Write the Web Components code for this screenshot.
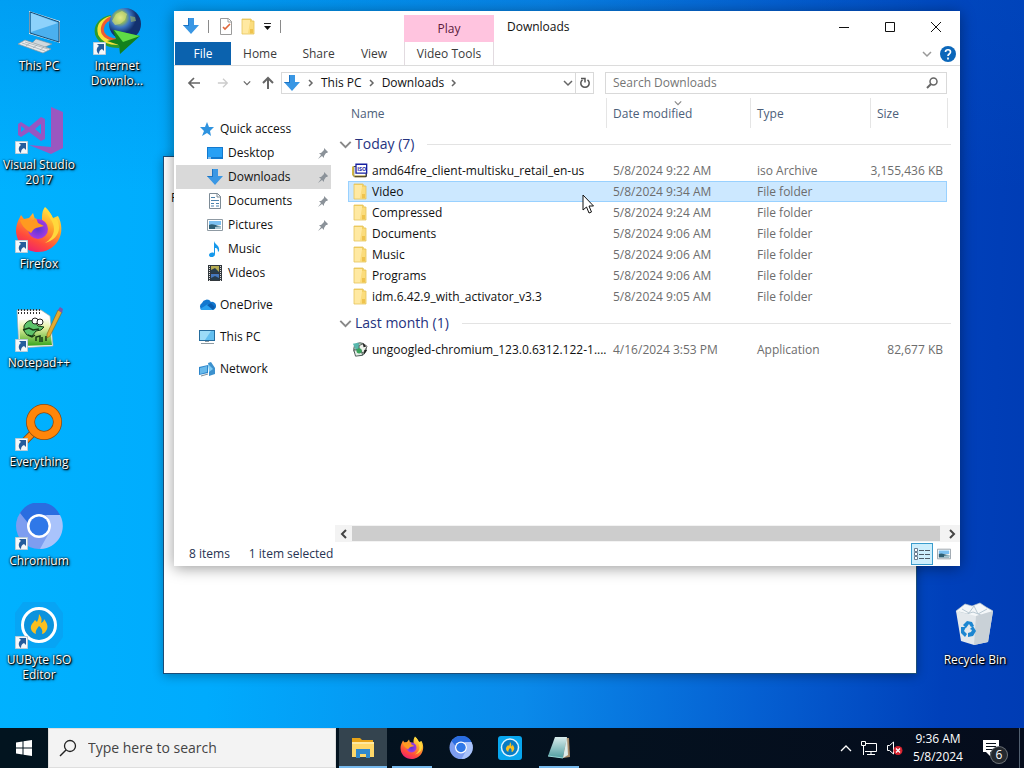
<!DOCTYPE html>
<html lang="en">
<head>
<meta charset="utf-8">
<title>Desktop</title>
<style>
html, body { margin: 0; height: 100%; }
body { font: 12px/16px "Open Sans", "Noto Sans", sans-serif; color: #111; overflow: hidden; }
</style>
</head>
<body>
<desktop-shell></desktop-shell>
<script>
const FOLDER = '<path d="M1 1h9l1 2h2v13H1z" fill="#f2cf62"/><path d="M1 2h8v14H1z" fill="#ffe9a2"/><path d="M9 4l4-1v13l-6-1z" fill="#fbdc7c"/><path d="M9 11h3v4H9z" fill="#efc34e"/><path d="M1 1h9l1 2h2v13H1z" fill="none" stroke="#e6c45c" stroke-width=".8"/>';
const DOWN = '<path d="M6 0h6v7h5l-8 9-8-9h5z" fill="#3a97e4"/><path d="M6 0h1v8H2l7 8-8-9h5z" fill="#1b74c5"/>';
const FLAME = '<path d="M24 12c3 4 3 6 2 9 2-1 3-2 3-4 3 4 5 8 2 12-1 2-3 3-4 3 1-3 0-6-3-8-2 3-4 5-3 8-3-1-6-4-5-8 1-3 3-4 4-6l2 2c1-2 2-5 2-8z" fill="#fbbf1f"/>';
const FIREFOX = `<defs><linearGradient id="a" x1=".8" y1="0" x2=".3" y2="1"><stop offset="0" stop-color="#fff04a"/><stop offset=".4" stop-color="#ffa02a"/><stop offset=".75" stop-color="#ff4a3c"/><stop offset="1" stop-color="#ee1f70"/></linearGradient><radialGradient id="b"><stop offset="0" stop-color="#5b35d6"/><stop offset="1" stop-color="#a43be0"/></radialGradient></defs>
<path d="M30 1c5 4 6 8 8 11l5-2c4 7 5 17 0 25-5 8-13 11-20 11C11 46 1 37 1 24c0-5 2-9 3-11l2-4 3 4 5-1 4-5 2 6 7 1c0-5 0-9 3-13z" fill="url(#a)"/>
<circle cx="23" cy="23" r="10" fill="url(#b)"/><path d="M5 14l6-1 6 2 4-3 2 5 6 3-8 2c-3 1-4 4-5 5-4-3-9-6-11-13z" fill="#ff9a20"/><path d="M31 3c1 8 8 11 8 20 0 6-4 11-9 14 8-2 14-8 14-15 0-4-1-8-3-10l-3 1C37 8 34 6 31 3z" fill="#ffd83c"/>`;
const CHROMIUM = '<circle cx="24" cy="23" r="23" fill="#7d9df0"/><path d="M5 10A23 23 0 0 1 45 12H24c-6 0-10 4-11 8z" fill="#2a6de0"/><path d="M45 12a23 23 0 0 1-20 34l10-18c2-5 1-11-4-16z" fill="#a9c3fb"/><circle cx="24" cy="23" r="12" fill="#fff"/><circle cx="24" cy="23" r="9.500" fill="#2f78e8"/>';
const PICTURE = '<path d="M.5 2.500h15v11H.5z" fill="#fff" stroke="#8f9aa3"/><path d="M2 4h12v4H2z" fill="#7cc0f0"/><path d="M2 8c4-2 6 1 12 1v3H2z" fill="#2f5f74"/><path d="M8 10l6-1v3H8z" fill="#a9c6d0"/>';
const ICONS = {
 pc: [48,48,'<path d="M21 31l16 5-9 4-12-4z" fill="#cfd8dd" stroke="#79909c" stroke-width=".6"/><path d="M14 3l31 10v22L14 26z" fill="#d5e6ef"/><path d="M15 4l29 10v20L15 25z" fill="#4bb0ee" stroke="#174b72"/><path d="M16 5l27 10-27 9z" fill="#8dd2fb"/><path d="M3 36l7-4 26 9-8 4z" fill="#e7eaec" stroke="#8b979d" stroke-width=".7"/><path d="M7 35l23 8M10 34l23 7M15 35l-4 3M22 37l-4 3M29 39l-4 3" stroke="#9aa6ac" stroke-width=".7"/>'],
 idm: [48,48,'<defs><radialGradient id="g" cx=".35" cy=".3"><stop offset="0" stop-color="#e8f39b"/><stop offset=".35" stop-color="#8fb860"/><stop offset=".6" stop-color="#3e78c4"/><stop offset="1" stop-color="#12316f"/></radialGradient></defs><path d="M18 9C8 11 2 18 4 26c3 8 12 12 22 12" fill="none" stroke="#2c9b2c" stroke-width="4"/><path d="M18 10C8 13 5 19 7 26c3 6 10 9 18 9" fill="none" stroke="#f7e23c" stroke-width="4"/><path d="M18 10C11 13 8 19 10 25c2 4 8 7 15 7" fill="none" stroke="#ef5a32" stroke-width="3"/><circle cx="32" cy="16" r="16" fill="url(#g)"/><path d="M23 6l6-3 5 3-2 6-5 4-5 1-3-4z" fill="#dbe27a" opacity=".6"/><path d="M37 8l5 1 1 4-5 1z" fill="#8fae72" opacity=".7"/><path d="M20 22l27 6-20 18-1-9-12-4 9-2z" fill="#13811d"/><path d="M21 22l26 6-17 6z" fill="#5fdc46"/>'],
 vs: [48,48,'<path d="M36 0l12 5v36l-12 6L14 38l22 2z" fill="#9a57c0"/><path fill-rule="evenodd" d="M3 17l3-2 8 5 12-10 4 2v20l-4 2-12-9-8 5-3-2zM6 19v6l4-3zM26 17l-6 5 6 5z" fill="#9656c2"/>'],
 firefox: [48,48,FIREFOX],
 npp: [48,48,'<defs><linearGradient id="n" x1="0" y1="0" x2="0" y2="1"><stop offset="0" stop-color="#fff"/><stop offset=".35" stop-color="#e5f0a0"/><stop offset="1" stop-color="#36a41c"/></linearGradient></defs><path d="M2 5h24l9 6 3 30-34 2z" fill="#fff" stroke="#a8aaa4" stroke-width=".7"/><path d="M4 15l30-2 3 27-32 1z" fill="url(#n)"/><path d="M3 5h23M3 8h23" stroke="#333" stroke-width="2" stroke-dasharray="1 2"/><path d="M9 21c2-5 7-7 11-4l3 4 6 1-3 3-5 1-4 5-5-1-3-4z" fill="#5dc36b" stroke="#173b14"/><circle cx="20" cy="16" r="3" fill="#fff" stroke="#222"/><circle cx="25" cy="17" r="3" fill="#fff" stroke="#222"/><path d="M8 25l6-2 4 2 6-1M13 30l4 2 3-2M21 36v-4l4-1v6M27 32v5M31 31v5" fill="none" stroke="#173b14" stroke-width="1.500"/><path d="M43 5l4 2-12 24-3 2v-4z" fill="#e2ab32" stroke="#84601a" stroke-width=".6"/><path d="M43 5l2-3 3 2-1 4z" fill="#7b55ad"/>'],
 everything: [48,48,'<path d="M20 27L9 38" stroke="#8b4a12" stroke-width="7.500"/><path d="M20 27L9 38" stroke="#ff8a0c" stroke-width="6"/><circle cx="29" cy="18" r="13.500" fill="none" stroke="#8b4a12" stroke-width="9"/><circle cx="29" cy="18" r="13.500" fill="none" stroke="#ff860a" stroke-width="7.500"/>'],
 chromium: [48,48,CHROMIUM],
 uubyte: [48,48,'<path d="M8 0h32l8 11v24l-8 11H8L0 35V11z" fill="#0a9ff0" opacity=".7"/><circle cx="24" cy="23" r="16.500" fill="#0c93dd" stroke="#fff" stroke-width="3"/>'+FLAME],
 uutile: [48,48,'<rect x="0" y="0" width="48" height="48" rx="6" fill="#08a6ee"/><circle cx="24" cy="23" r="17" fill="#087cc4" stroke="#dff4ff" stroke-width="3"/>'+FLAME],
 recycle: [48,48,'<path d="M5 9l9-7 7 2 8-3 6 4 7 4-6 6H10z" fill="#f4f7f9" stroke="#b9c4cc" stroke-width=".7"/><path d="M11 7l7 4 5-7 4 8 9-5M8 10l8 2 6-2 8 3" fill="none" stroke="#b9c8d2"/><path d="M5 9l20 5 17-5-5 31-14 3-13-4z" fill="#e3e8ec"/><path d="M25 14l17-5-5 31-14 3z" fill="#c9d1d7"/><path d="M12 23l4-4 5 1 2 4-3 1-2-3-3 4zM10 25l5 0-2 4 3 3-2 3-4-4zM22 24l3 5-3 5-5 1 0-4 3-1 1-2-2-1z" fill="#1c86d1"/>'],
 shortcut: [13,13,'<path d="M.5.5h12v12H.5z" fill="#f5f8fa" stroke="#b9ccd8"/><path d="M4 2h7v7L9 7c-2 1-3 2-3 5-3-2-3-6 0-8z" fill="#255c9c"/>'],
 star: [16,16,'<path d="M8 1l2 5 5 0-4 4 1 5-4-3-5 3 2-5-4-4 5 0z" fill="#2f93df"/>'],
 desk: [16,16,'<path d="M0 2h16v12H0z" fill="#1379ce"/><path d="M1 3h14v9H1z" fill="#28a0f5"/><path d="M1 13h3" stroke="#fff"/>'],
 down: [18,17,DOWN],
 docs: [16,16,'<path d="M2.500.5h8l3 3v12h-11z" fill="#fff" stroke="#7d8b96"/><path d="M10 0v4h4" fill="none" stroke="#7d8b96"/><path d="M4 4.500h4M4 7.500h8M4 10.500h3M4 13h3M9 10.500h3M9 13h3" stroke="#4b83ad"/>'],
 pics: [16,16,PICTURE],
 music: [16,16,'<path d="M7 0c1 4 6 4 5 10l-1 1c0-4-2-4-3-4v6c0 4-6 4-6 1 0-2 3-3 5-2z" fill="#1699ec"/>'],
 videos: [16,16,'<path d="M1 0h14v16H1z" fill="#32383d"/><path d="M4 1h8v7H4z" fill="#b7ad54"/><path d="M4 9h8v6H4z" fill="#4679bd"/><path d="M4 5l4-2 4 4v1H4zM4 13l4-2 4 2v2H4z" fill="#273d4c"/><path d="M2.500 1v15M13.500 1v15" stroke="#e0e0e0" stroke-dasharray="1 1"/>'],
 cloud: [18,16,'<path d="M4 13a4 4 0 0 1 0-7 5 5 0 0 1 9-1 4 4 0 0 1 2 8z" fill="#1378cf"/><path d="M2 12l8-5 6 5-1 1H4z" fill="#2aa1ef"/><path d="M9 8l4-2 4 4-2 3z" fill="#0b5cad"/>'],
 smallpc: [18,16,'<path d="M1 1h16v11H1z" fill="#256c9d"/><path d="M2 2h14v9H2z" fill="#62bff0"/><path d="M2 2h11L7 11H2z" fill="#9bdcf8"/><path d="M7 12h4v1H7zM3 14h13v1H3z" fill="#8e9ba3"/>'],
 network: [18,16,'<path d="M1 6l9-2v8l-9 2z" fill="#2d86cb"/><path d="M2 7l7-2v6l-7 2z" fill="#67b9eb"/><path d="M10 2l3-1 4 6v6l-6 2V7z" fill="#3c91ce"/><path d="M10 3l5 5-4 3z" fill="#7fcbf3"/><path d="M3 15l7-2" stroke="#7e8d96"/>'],
 pin: [12,12,'<path d="M7 1l4 4-1 1-1 0-2 3 0 2-2-2-4 3 3-4-2-2h2l3-3z" fill="#8b9299"/>'],
 folder: [14,17,FOLDER],
 iso: [18,17,'<path d="M2 4h14v11H2z" fill="#fff" stroke="#333"/><path d="M1 4v10M2 15h13" stroke="#d6b93c" stroke-width="2"/><path d="M3 15.500h13V11" fill="none" stroke="#222"/><path d="M4.500 1.500h12v10h-12z" fill="#fff" stroke="#1720a0" stroke-width="1.500"/><text x="6" y="9" font-size="6" font-weight="700" fill="#1720a0">ISO</text>'],
 setup: [18,17,'<circle cx="9" cy="8" r="7" fill="#bcd9c4" stroke="#3d4b48"/><path d="M1 2l6-1 3 6-5 3z" fill="#57b7ad"/><path d="M8 4l5-2 4 3-4 7-5-1z" fill="#eef2ec" stroke="#555"/><path d="M2 9h8l2 6-8 1z" fill="#e6ece8" stroke="#3c4c48"/><circle cx="8" cy="10" r="3" fill="#3aa35b"/><path d="M12 1l4 4-3 1zM14 9l3 0-4 6z" fill="#222"/>'],
 props: [14,17,'<path d="M1.500.5h8l3 3v13h-11z" fill="#fff" stroke="#9b9b9b"/><path d="M9 1v3h4" fill="none" stroke="#9b9b9b"/><path d="M4 9l2 2 5-5" fill="none" stroke="#e0673b" stroke-width="1.600"/>'],
 caretbar: [9,9,'<path d="M1 1.500h7" stroke="#222"/><path d="M1 4h7L4.500 8z" fill="#111"/>'],
 min: [12,12,'<path d="M1 6.500h10" stroke="#111"/>'],
 max: [12,12,'<path d="M1.500 1.500h9v9h-9z" fill="none" stroke="#111"/>'],
 close: [12,12,'<path d="M1 1l10 10M11 1L1 11" stroke="#111"/>'],
 chevd: [10,10,'<path d="M1 3l4 4 4-4" fill="none" stroke="currentColor" stroke-width="1.500"/>'],
 chevr: [8,10,'<path d="M2 2l3 3-3 3" fill="none" stroke="currentColor" stroke-width="1.500"/>'],
 chevl: [8,10,'<path d="M6 1L2 5l4 4" fill="none" stroke="currentColor" stroke-width="2"/>'],
 chevR: [8,10,'<path d="M2 1l4 4-4 4" fill="none" stroke="currentColor" stroke-width="2"/>'],
 help: [16,16,'<circle cx="8" cy="8" r="8" fill="#0b67ba"/><path d="M5.500 6c0-3 5-3 5 0 0 2-2.500 2-2.500 4M8 11.500v2" fill="none" stroke="#fff" stroke-width="1.700"/>'],
 back: [14,12,'<path d="M13 6H2M7 1L2 6l5 5" fill="none" stroke="currentColor" stroke-width="1.700"/>'],
 fwd: [14,12,'<path d="M1 6h11M7 1l5 5-5 5" fill="none" stroke="currentColor" stroke-width="1.500"/>'],
 up: [12,14,'<path d="M6 13V2M1 7l5-5 5 5" fill="none" stroke="currentColor" stroke-width="2"/>'],
 refresh: [12,12,'<path d="M8.500 2.800A4.200 4.200 0 1 1 3.500 2.800" fill="none" stroke="#555" stroke-width="1.500"/><path d="M2 1.500h4v4" fill="none" stroke="#555" stroke-width="1.500"/>'],
 lens: [12,12,'<circle cx="7.500" cy="4.500" r="3.500" fill="none" stroke="#666" stroke-width="1.500"/><path d="M5 7L1 11" stroke="#666" stroke-width="2"/>'],
 details: [16,14,'<path d="M.5 1.500h3v3h-3zM.5 5.500h3v3h-3zM.5 9.500h3v3h-3z" fill="#fff" stroke="#6b7f93"/><path d="M5 3.500h11M5 7.500h11M5 11.500h11" stroke="#4d5a66" stroke-dasharray="5 1"/>'],
 win: [16,16,'<path d="M0 2.500l6.500-1v6H0zM7.500 1.300L16 0v7.500H7.500zM0 8.500h6.500v6l-6.500-1zM7.500 8.500H16V16l-8.500-1.300z" fill="#fff"/>'],
 biglens: [18,18,'<circle cx="11" cy="7" r="5.500" fill="none" stroke="#222" stroke-width="1.300"/><path d="M7 11l-6 6" stroke="#222" stroke-width="1.500"/>'],
 explorer: [24,22,'<path d="M1 1h8l2 2h11v17H1z" fill="#e8a317"/><path d="M1 5h22v15H1z" fill="#ffd869"/><path d="M5 12h14v9h-4v-4H9v4H5z" fill="#3189cc"/><path d="M1 5h22v2H1z" fill="#ffe9a0"/>'],
 notepad: [24,24,'<defs><linearGradient id="p" x1="0" y1="0" x2="0" y2="1"><stop offset="0" stop-color="#d8ecec"/><stop offset="1" stop-color="#4f9da0"/></linearGradient></defs><path d="M19 2h3l1 19-7 1z" fill="#a98c6a"/><path d="M8 1h12l-4 21-15-2z" fill="url(#p)"/><path d="M20 1l1 18-5 3z" fill="#dceceb"/><path d="M1 20l15 2" stroke="#9adada"/>'],
 chevu: [12,8,'<path d="M1 7l5-5 5 5" fill="none" stroke="#fff" stroke-width="1.300"/>'],
 net: [16,14,'<path d="M4.500 2.500h11v8H4M10 11v2M6 13.500h8" fill="none" stroke="#fff"/><path d="M.5.5h4v4h-4zM2.500 5v9" fill="#08101c" stroke="#fff"/>'],
 vol: [18,14,'<path d="M1.500 4.500h2l4-3.500v12L3.500 9.500h-2z" fill="none" stroke="#fff"/><circle cx="12" cy="9.500" r="4.500" fill="#d8232f"/><path d="M10 7.500l4 4M14 7.500l-4 4" stroke="#fff" stroke-width="1.300"/>'],
 note: [18,18,'<path d="M1 1h16v12H8v4l-4-4H1z" fill="#fff"/><path d="M4 4.500h10M4 7.500h10M4 10.500h7" stroke="#07101b"/>'],
 cursor: [12,20,'<path d="M1 1v15l3.500-3 2.500 6 2.500-1L7 12h4.500z" fill="#fff" stroke="#111"/>'],
};

const RESET = `button{all:unset;box-sizing:border-box;display:flex;align-items:center;justify-content:center;cursor:default}`;
function define(name, html, setup) {
  const tpl = document.createElement('template');
  tpl.innerHTML = html;
  customElements.define(name, class extends HTMLElement {
    connectedCallback() {
      if (this.shadowRoot) return;
      this.attachShadow({ mode: 'open' }).append(tpl.content.cloneNode(true));
      if (setup) setup(this, this.shadowRoot);
    }
  });
}

define('app-icon', `<style>:host{display:inline-flex;flex:none}svg{display:block}</style>`, (el, root) => {
  const [w, h, body] = ICONS[el.getAttribute('name')];
  const W = el.getAttribute('w') || w, H = el.getAttribute('h') || h;
  const box = document.createElement('div');
  box.innerHTML = `<svg width="${W}" height="${H}" viewBox="0 0 ${w} ${h}" aria-hidden="true">${body}</svg>`;
  root.append(box.firstChild);
});

define('desk-icon', `<style>${RESET}
:host{display:block;width:76px;height:99px;color:#fff}
button{flex-direction:column;width:100%;gap:2px;line-height:15px;text-align:center;text-shadow:1px 1px 1px #000,0 0 2px #000,1px 1px 3px #000}
.pic{position:relative;display:flex}
.mark{position:absolute;left:0;bottom:1px}
</style><button><span class="pic"></span><span><slot></slot></span></button>`, (el, root) => {
  root.querySelector('.pic').innerHTML = `<app-icon name="${el.getAttribute('icon')}"></app-icon>` +
    (el.hasAttribute('shortcut') ? '<app-icon class="mark" name="shortcut"></app-icon>' : '');
});

define('nav-item', `<style>${RESET}
:host{display:block}
button{width:100%;height:24px;justify-content:flex-start;gap:5px;padding:0 2px 0 23px}
:host([child]) button{padding-left:31px}
:host([selected]) button{background:#d9d9d9}
.ic{width:16px;display:flex;justify-content:center}
.t{flex:1}
</style><button><span class="ic"></span><span class="t"><slot></slot></span></button>`, (el, root) => {
  root.querySelector('.ic').innerHTML = `<app-icon name="${el.getAttribute('icon')}"></app-icon>`;
  if (el.hasAttribute('pinned')) root.querySelector('button').insertAdjacentHTML('beforeend', '<app-icon name="pin"></app-icon>');
});

define('nav-pane', `<style>
:host{display:flex;flex-direction:column;gap:8px;width:155px;flex:none;padding:19px 0 0 2px}
</style>
<div><nav-item icon="star">Quick access</nav-item>
<nav-item icon="desk" child pinned>Desktop</nav-item>
<nav-item icon="down" child pinned selected>Downloads</nav-item>
<nav-item icon="docs" child pinned>Documents</nav-item>
<nav-item icon="pics" child pinned>Pictures</nav-item>
<nav-item icon="music" child>Music</nav-item>
<nav-item icon="videos" child>Videos</nav-item></div>
<nav-item icon="cloud">OneDrive</nav-item>
<nav-item icon="smallpc">This PC</nav-item>
<nav-item icon="network">Network</nav-item>`);

const FILES = [
  ['Today (7)', [
    ['iso', 'amd64fre_client-multisku_retail_en-us', '5/8/2024 9:22 AM', 'iso Archive', '3,155,436 KB'],
    ['folder', 'Video', '5/8/2024 9:34 AM', 'File folder', '', true],
    ['folder', 'Compressed', '5/8/2024 9:24 AM', 'File folder', ''],
    ['folder', 'Documents', '5/8/2024 9:06 AM', 'File folder', ''],
    ['folder', 'Music', '5/8/2024 9:06 AM', 'File folder', ''],
    ['folder', 'Programs', '5/8/2024 9:06 AM', 'File folder', ''],
    ['folder', 'idm.6.42.9_with_activator_v3.3', '5/8/2024 9:05 AM', 'File folder', '']]],
  ['Last month (1)', [
    ['setup', 'ungoogled-chromium_123.0.6312.122-1....', '4/16/2024 3:53 PM', 'Application', '82,677 KB']]]
];
define('file-table', `<style>
:host{display:block;padding:0 9px 0 8px}
table{width:100%;table-layout:fixed;border-collapse:separate;border-spacing:0}
th,td{padding:0 0 0 7px;font-weight:400;text-align:left;white-space:nowrap;overflow:hidden;box-sizing:border-box}
thead th{height:30px;color:#4c607a;border-left:1px solid #e5e5e5;padding:2px 0 0 6px;position:relative}
thead th:first-child,thead th.name{border:0}
thead th.name{padding-left:3px}
td.name{padding-left:4px}
thead app-icon{position:absolute;left:67px;top:1px;color:#8a8a8a}
.group th{height:32px;padding:0}
.group div{display:flex;align-items:center;gap:3px;font-size:14px;line-height:20px;color:#26337f}
.group i{flex:1;height:1px;background:#e3e3e3;margin-left:10px}
.group app-icon{color:#888}
.file td{height:21px;color:#6d6d6d}
.file .name div{display:flex;align-items:center;gap:4px;color:#111}
.file .name app-icon{width:16px;justify-content:center}
.file td.size{text-align:right;padding:0 4px 0 0}
.sel td:not(:first-child):not(:last-child){background:#cce8ff;border:solid #99d1ff;border-width:1px 0}
.sel td.name{border-left-width:1px!important;padding-left:3px}
.sel td.size{border-right-width:1px!important}
</style><table><colgroup><col style="width:9px"><col><col style="width:144px"><col style="width:120px"><col style="width:77px"><col style="width:4px"></colgroup>
<thead><tr><th></th><th class="name">Name</th><th>Date modified<app-icon name="chevd" w="8" h="8"></app-icon></th><th>Type</th><th>Size</th><th></th></tr></thead></table>`, (el, root) => {
  root.querySelector('table').insertAdjacentHTML('beforeend', FILES.map(([g, rows]) => `<tbody>
<tr class="group"><th colspan="6" scope="rowgroup"><div><app-icon name="chevd" w="13" h="13"></app-icon>${g}<i></i></div></th></tr>
${rows.map(r => `<tr class="file${r[5] ? ' sel' : ''}"><td></td><td class="name"><div><app-icon name="${r[0]}"></app-icon>${r[1]}</div></td><td>${r[2]}</td><td>${r[3]}</td><td class="size">${r[4]}</td><td></td></tr>`).join('')}</tbody>`).join(''));
});

define('title-bar', `<style>${RESET}
:host{display:flex;height:31px}
.qat{width:230px;box-sizing:border-box;display:flex;align-items:center;gap:8px;padding-left:8px}
.qat i{width:1px;height:13px;background:#8a8a8a}
.qat i+button{margin-left:2px}
.ctx{width:90px;background:#ffc4df;margin-top:4px;color:#5b1a3c;padding-top:1px}
.title{flex:1;padding:8px 0 0 13px;margin:0;font:inherit}
.w{width:46px;height:31px}
.w:last-child{margin-right:1px}
</style>
<div class="qat"><app-icon name="down"></app-icon><i></i><button aria-label="Properties"><app-icon name="props"></app-icon></button><button aria-label="New folder"><app-icon name="folder"></app-icon></button><button aria-label="Customize"><app-icon name="caretbar"></app-icon></button><i></i></div>
<button class="ctx">Play</button><h1 class="title">Downloads</h1>
<button class="w" aria-label="Minimize"><app-icon name="min"></app-icon></button><button class="w" aria-label="Maximize"><app-icon name="max"></app-icon></button><button class="w" aria-label="Close"><app-icon name="close"></app-icon></button>`);

define('ribbon-tabs', `<style>${RESET}
:host{display:grid;grid-template-columns:56px 58px 59px 56px 90px 1fr;height:24px;box-sizing:border-box;border-bottom:1px solid #dcdcdc;padding-left:1px;color:#3b3b3b}
.file{background:#0b62ae;color:#fff}
.view{padding-right:4px}
.ctx{border:solid #e2dbe0;border-width:0 1px}
.end{display:flex;justify-content:flex-end;align-items:center;gap:8px;padding-right:4px;color:#999}
</style><button class="file">File</button><button>Home</button><button>Share</button><button class="view">View</button><button class="ctx">Video Tools</button>
<div class="end"><button aria-label="Expand ribbon"><app-icon name="chevd" w="10" h="10"></app-icon></button><button aria-label="Help"><app-icon name="help"></app-icon></button></div>`);

define('address-row', `<style>${RESET}
:host{display:flex;padding:6px 13px 4px 0}
.nav{width:107px;display:grid;grid-template-columns:33px 26px 22px 20px;padding-left:3px;box-sizing:border-box;color:#666}
.nav .off{color:#ccc}
.bar,.find{box-sizing:border-box;height:22px;border:1px solid #d9d9d9;display:flex;align-items:center}
.bar{flex:1;padding-left:1px;color:#666}
.bar a{color:#111;text-decoration:none}
.bar>app-icon{margin:0 6px}
.bar>app-icon:first-child{margin:0}
.bar .drop{margin-left:auto;width:15px;height:20px}
.bar .re{width:18px;height:20px;border-left:1px solid #d9d9d9}
.find{width:342px;margin-left:11px;padding:0 8px 0 7px}
input{all:unset;flex:1;font:inherit}
input::placeholder{color:#757575;opacity:1}
</style><div class="nav"><button aria-label="Back"><app-icon name="back"></app-icon></button><button class="off" aria-label="Forward"><app-icon name="fwd" w="12"></app-icon></button><button aria-label="Recent"><app-icon name="chevd" w="8" h="8"></app-icon></button><button aria-label="Up"><app-icon name="up"></app-icon></button></div>
<div class="bar"><app-icon name="down"></app-icon><app-icon name="chevr"></app-icon><a href="#pc">This PC</a><app-icon name="chevr"></app-icon><a href="#downloads">Downloads</a><app-icon name="chevr"></app-icon><button class="drop" aria-label="Previous locations"><app-icon name="chevd"></app-icon></button><button class="re" aria-label="Refresh"><app-icon name="refresh"></app-icon></button></div>
<label class="find"><input type="text" placeholder="Search Downloads" aria-label="Search Downloads"><app-icon name="lens"></app-icon></label>`);

define('scroll-strip', `<style>${RESET}
:host{display:flex;height:17px;background:#f3f3f3;color:#444}
button{width:17px}
.thumb{flex:1;background:#cdcdcd;height:15px;margin:1px 3px 1px 0}
</style><button aria-label="Scroll left"><app-icon name="chevl"></app-icon></button><div class="thumb"></div><button aria-label="Scroll right"><app-icon name="chevR"></app-icon></button>`);

define('status-bar', `<style>${RESET}
:host{display:flex;align-items:center;height:24px;padding:0 5px 0 15px;gap:19px;color:#263353}
.views{margin-left:auto;display:flex}
button{width:22px;height:22px}
.on{background:#cdeefc;border:1px solid #3a9ccc}
</style><span>8 items</span><span>1 item selected</span><div class="views"><button class="on" aria-label="Details"><app-icon name="details"></app-icon></button><button aria-label="Large icons"><app-icon name="pics" w="14"></app-icon></button></div>`);

define('explorer-window', `<style>
:host{display:flex;flex-direction:column;background:#fff;box-shadow:0 2px 14px rgba(0,0,0,.4)}
main{flex:1;display:flex;min-height:0}
section{flex:1;min-width:0;display:flex;flex-direction:column}
file-table{flex:1}
scroll-strip{margin:0 0 0 4px}
</style><title-bar></title-bar><ribbon-tabs></ribbon-tabs><address-row></address-row>
<main><nav-pane></nav-pane><section><file-table></file-table><scroll-strip></scroll-strip></section></main><status-bar></status-bar>`);

define('task-bar', `<style>${RESET}
:host{display:flex;height:40px;background:linear-gradient(90deg,#02141f,#04111f 60%,#050c1c);color:#fff}
.start{width:48px}
.find{width:288px;box-sizing:border-box;background:#f3f3f3;border:1px solid #dedede;display:flex;align-items:center;gap:11px;padding-left:10px;margin-right:3px}
input{all:unset;flex:1;min-width:0;font-size:14px;line-height:20px}
input::placeholder{color:#444;opacity:1}
.apps{display:flex;gap:1px;flex:1}
.apps button{width:48px;position:relative}
.apps .run::after{content:"";position:absolute;left:4px;right:4px;bottom:0;height:2px;background:#76b9ed}
.apps .on{background:#34444f}
.apps .on::after{left:0;right:0}
.tray{display:flex;align-items:center;gap:9px}
.clock{flex-direction:column;line-height:18px;width:62px;height:40px;padding-left:6px;text-align:center}
.note{width:54px;height:40px;position:relative;border-right:1px solid #526070;margin-right:4px;padding-right:3px}
.badge{position:absolute;left:25px;top:19px;width:16px;height:16px;border-radius:50%;background:#24292f;box-shadow:0 0 0 1px #6d7378;line-height:16px;text-align:center}
</style><button class="start" aria-label="Start"><app-icon name="win"></app-icon></button>
<label class="find"><app-icon name="biglens"></app-icon><input type="text" placeholder="Type here to search" aria-label="Type here to search"></label>
<div class="apps"><button class="run on" aria-label="File Explorer"><app-icon name="explorer"></app-icon></button><button class="run" aria-label="Firefox"><app-icon name="firefox" w="24" h="24"></app-icon></button><button aria-label="Chromium"><app-icon name="chromium" w="24" h="24"></app-icon></button><button aria-label="UUByte"><app-icon name="uutile" w="24" h="24"></app-icon></button><button class="run" aria-label="Notepad"><app-icon name="notepad"></app-icon></button></div>
<div class="tray"><app-icon name="chevu"></app-icon><app-icon name="net"></app-icon><app-icon name="vol"></app-icon></div>
<button class="clock"><span>9:36 AM</span><span>5/8/2024</span></button>
<button class="note" aria-label="Notifications"><app-icon name="note"></app-icon><span class="badge">6</span></button>`);

define('desktop-shell', `<style>
:host{display:flex;flex-direction:column;height:100vh;min-height:600px;background:linear-gradient(180deg,rgba(0,90,200,.22),rgba(0,90,200,0) 25%),linear-gradient(92deg,#00b2ff 0,#00abfd 22%,#0a8aea 52%,#0560d2 74%,#0040ba 92%,#003cb4)}
.desk{flex:1;position:relative;overflow:hidden}
.icons{display:flex;gap:2px;padding:8px 0 0 1px}
.bin{position:absolute;right:11px;top:602px}
.under{position:absolute;left:163px;top:156px;width:752px;height:516px;background:#fff;border:1px solid #1b4d78;box-shadow:0 2px 10px rgba(0,0,0,.3);box-sizing:content-box}
.under span{display:block;padding:33px 0 0 7px}
explorer-window{position:absolute;left:174px;top:11px;width:786px;height:555px}
.cursor{position:absolute;left:582px;top:194px}
</style><div class="desk"><div class="icons"><div>
<desk-icon icon="pc">This PC</desk-icon><desk-icon icon="vs" shortcut>Visual Studio 2017</desk-icon><desk-icon icon="firefox" shortcut>Firefox</desk-icon><desk-icon icon="npp" shortcut>Notepad++</desk-icon><desk-icon icon="everything" shortcut>Everything</desk-icon><desk-icon icon="chromium" shortcut>Chromium</desk-icon><desk-icon icon="uubyte" shortcut>UUByte ISO Editor</desk-icon></div>
<div><desk-icon icon="idm" shortcut>Internet Downlo...</desk-icon></div></div>
<desk-icon class="bin" icon="recycle">Recycle Bin</desk-icon>
<div class="under"><span>F</span></div>
<explorer-window></explorer-window><app-icon class="cursor" name="cursor"></app-icon></div>
<task-bar></task-bar>`);
</script>
</body>
</html>
